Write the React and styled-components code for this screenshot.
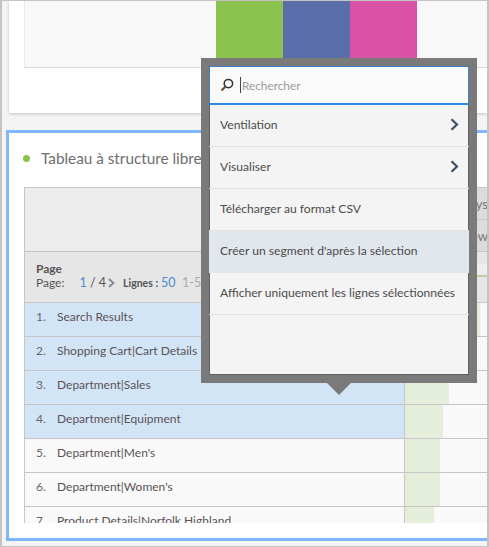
import React from 'react';
import styled, { createGlobalStyle } from 'styled-components';

const Global = createGlobalStyle`
  html, body { margin: 0; padding: 0; background: #f4f4f4; }
  * { box-sizing: border-box; }
`;

const Frame = styled.div`
  width: 489px; height: 547px; overflow: hidden; position: relative;
  border-style: solid; border-color: #c4c4c4; border-width: 1px 2px 1px 2px;
  padding-left: 7px;
  font-family: Lato, "Open Sans", "Liberation Sans", sans-serif;
  color: #4b4b4b;
  background: #f4f4f4;
`;
const TopCard = styled.section`
  height: 112px; background: #fff;
  box-shadow: 0 1px 3px rgba(0,0,0,.2);
  padding-left: 15px; display: flex; align-items: flex-start;
`;
const ChartArea = styled.div`
  width: 192px; height: 67px; background: #f8f8f8;
  border-left: 1px solid #ececec; border-bottom: 1px solid #d8d8d8;
`;
const Bar = styled.div`
  width: 67px; height: 67px; background: ${p => p.$c};
`;
const ChartRest = styled.div`
  flex: 1; height: 67px; background: #f8f8f8; border-bottom: 1px solid #d8d8d8;
`;
const Panel = styled.section`
  margin: 17px 0 0 -3px; height: 411px; width: 500px;
  border: 3px solid #80b6fb; background: #fff;
  padding: 12px 0 0 14px;
`;
const Title = styled.div`
  display: flex; align-items: center; gap: 11px; height: 26px;
  font-size: 15.3px; color: #6e6e6e;
`;
const Dot = styled.span`
  width: 7px; height: 7px; border-radius: 50%; background: #8cc34f;
`;
const Table = styled.div`
  margin: 16px 0 0 1px; width: 480px; height: 336px; overflow: hidden;
  border-left: 1px solid #c6c6c6; border-top: 1px solid #c6c6c6;
`;
const HeadTop = styled.div`
  height: 64px; background: #ececec; border-bottom: 1px solid #c6c6c6;
  display: grid; grid-template-columns: 380px 83px;
`;
const HeadCols = styled.div`
  display: flex; flex-direction: column; background: #dcdcdc;
`;
const HeadCell = styled.div`
  height: 32px; background: #dcdcdc; border-bottom: 1px solid #c6c6c6;
  display: flex; justify-content: flex-end; align-items: center;
  font-size: 13px; color: #777; white-space: nowrap; overflow: hidden;
`;
const PageRow = styled.div`
  height: 51px; background: #e6e6e6; border-bottom: 1px solid #c6c6c6;
  display: grid; grid-template-columns: 380px 83px;
`;
const PageInfo = styled.div`
  padding: 10px 0 0 11px; font-size: 12px; line-height: 14px; color: #555;
  overflow: hidden;
`;
const PageStrong = styled.div`
  font-weight: 700; color: #5a5454; font-size: 12px;
`;
const Pager = styled.div`
  display: flex; align-items: center; white-space: nowrap;
`;
const Num = styled.span`
  color: #4a8bd0; font-size: 12.5px;
`;
const PageText = styled.span`
  margin-right: ${p => p.$m || 0}px; font-size: ${p => p.$s || 12}px; font-weight: ${p => p.$w || 400};
  color: ${p => p.$c || '#555'};
`;
const PagerArrow = styled.svg`
  width: 7px; height: 10px; margin: 0 8px 0 2px; flex: none;
`;
const TotalCell = styled.div`
  height: 50px; padding-top: 12px; background: #e6e6e6;
`;
const TotalLine = styled.div`
  height: 13px; background: #eeeeee; border-bottom: 2px solid #b9d29b;
`;
const Row = styled.div`
  height: 34px; border-bottom: 1px solid #c6c6c6;
  display: grid; grid-template-columns: 380px 83px;
  background: #f9f9f9;
`;
const Name = styled.div`
  display: flex; align-items: center; padding: 0 0 6px 11px; font-size: 12px; color: #5b5256;
  background: ${p => (p.$sel ? '#d2e5f6' : '#f9f9f9')};
  border-right: 1px solid #c6c6c6;
  white-space: nowrap;
`;
const Index = styled.span`
  width: 21px; color: #666;
`;
const Value = styled.div`
  background: #f9f9f9;
`;
const Fill = styled.div`
  height: 100%; background: #e4eedb;
`;
const Popover = styled.div`
  position: absolute; left: 199px; top: 57px; width: 276px; height: 325px;
  border: 8px solid #7a7a7a;
  background: #f4f4f4;
  box-shadow: inset 1px 0 0 #606060, inset -1px 0 0 #606060, inset 0 -1px 0 #606060;
`;
const Arrow = styled.div`
  position: absolute; left: 118px; bottom: -20px; width: 0; height: 0;
  border-left: 12px solid transparent; border-right: 12px solid transparent;
  border-top: 12px solid #7a7a7a;
`;
const Search = styled.div`
  height: 39px; background: #fafafa; border: 1px solid #3d7fc0;
  border-bottom: 2px solid #2c8ae0;
  display: flex; align-items: center; padding-left: 10px;
  font-size: 11.8px; color: #9a9a9a;
`;
const Loupe = styled.svg`
  width: 14px; height: 14px; margin-right: 6px; flex: none;
`;
const Caret = styled.span`
  width: 1px; height: 16px; background: #444; margin-right: 1px;
`;
const Item = styled.div`
  height: 42px; display: flex; align-items: center; justify-content: space-between;
  padding: 0 10px 3px 11px; font-size: 12.1px; color: #4b4b4b;
  border-bottom: 1px solid ${p => (p.$hover ? 'transparent' : '#e2e2e2')};
  background: ${p => (p.$hover ? '#e2e7ee' : 'transparent')};
  white-space: nowrap;
`;
const Chevron = styled.svg`
  width: 9px; height: 13px; flex: none;
`;

const rows = [
  { n: '1.', t: 'Search Results', sel: true, w: 75 },
  { n: '2.', t: 'Shopping Cart|Cart Details', sel: true, w: 60 },
  { n: '3.', t: 'Department|Sales', sel: true, w: 44 },
  { n: '4.', t: 'Department|Equipment', sel: true, w: 38 },
  { n: '5.', t: "Department|Men's", w: 35 },
  { n: '6.', t: "Department|Women's", w: 35 },
  { n: '7.', t: 'Product Details|Norfolk Highland', w: 29 },
];

const MenuChevron = () => (
  <Chevron viewBox="0 0 9 13" fill="none">
    <path d="M1.5 1.2 7 6.5 1.5 11.8" stroke="#3d4f66" strokeWidth="2.2" />
  </Chevron>
);

export default function App() {
  return (
    <>
      <Global />
      <Frame>
        <TopCard>
          <ChartArea />
          <Bar $c="#8cc34f" />
          <Bar $c="#5a6fa9" />
          <Bar $c="#d952a5" />
          <ChartRest />
        </TopCard>
        <Panel>
          <Title><Dot />Tableau à structure libre</Title>
          <Table>
            <HeadTop>
              <div />
              <HeadCols>
                <HeadCell>Days</HeadCell>
                <HeadCell>Page View</HeadCell>
              </HeadCols>
            </HeadTop>
            <PageRow>
              <PageInfo>
                <PageStrong>Page</PageStrong>
                <Pager>
                  <PageText $m={15}>Page:</PageText>
                  <Num>1</Num>
                  <PageText $s={12.5}>&nbsp;/ 4</PageText>
                  <PagerArrow viewBox="0 0 7 10" fill="none">
                    <path d="M1 1 5.5 5 1 9" stroke="#888" strokeWidth="1.8" />
                  </PagerArrow>
                  <PageText $m={3} $s={10.5} $w={700}>Lignes :</PageText>
                  <Num>50</Num>
                  <PageText $c="#aaa" $s={12.5}>&nbsp;&nbsp;1-50</PageText>
                </Pager>
              </PageInfo>
              <TotalCell><TotalLine /></TotalCell>
            </PageRow>
            {rows.map(r => (
              <Row key={r.n}>
                <Name $sel={r.sel}><Index>{r.n}</Index>{r.t}</Name>
                <Value><Fill style={{ width: `${r.w}px` }} /></Value>
              </Row>
            ))}
          </Table>
        </Panel>
        <Popover>
          <Search>
            <Loupe viewBox="0 0 14 14" fill="none">
              <circle cx="8.4" cy="5.6" r="4.2" stroke="#333" strokeWidth="1.5" />
              <path d="M5.3 8.7 1.5 12.5" stroke="#6b4a2a" strokeWidth="2" />
            </Loupe>
            <Caret />
            <span>Rechercher</span>
          </Search>
          <Item>Ventilation<MenuChevron /></Item>
          <Item>Visualiser<MenuChevron /></Item>
          <Item>Télécharger au format CSV</Item>
          <Item $hover>Créer un segment d'après la sélection</Item>
          <Item>Afficher uniquement les lignes sélectionnées</Item>
          <Arrow />
        </Popover>
      </Frame>
    </>
  );
}
